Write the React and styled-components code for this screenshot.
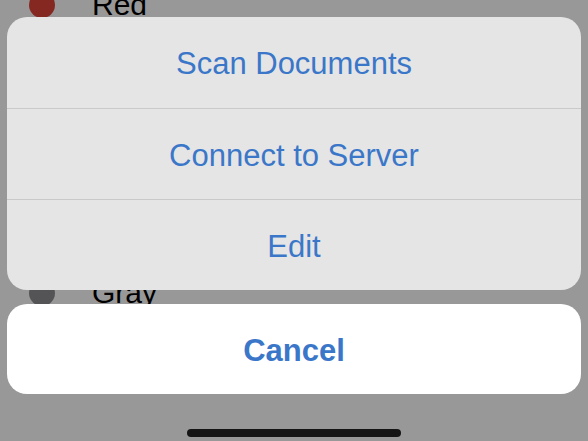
import React from "react";
import styled, { createGlobalStyle } from "styled-components";

const Global = createGlobalStyle`
  html, body { margin: 0; padding: 0; }
  body { width: 588px; height: 441px; overflow: hidden; font-family: "Liberation Sans", Arial, sans-serif; }
`;

const Screen = styled.div`
  position: relative;
  width: 588px;
  height: 441px;
  overflow: hidden;
  background: #ffffff;
`;

const List = styled.div`
  display: flex;
  flex-direction: column;
  margin-top: -19px;
`;

const ListRow = styled.div`
  display: flex;
  align-items: center;
  height: 48px;
  padding-left: 29px;
  gap: 37px;
  font-size: 30px;
  color: #000;
`;

const Dot = styled.span`
  width: 26px;
  height: 26px;
  border-radius: 50%;
  background: ${(p) => p.$color};
`;

const Dim = styled.div`
  position: absolute;
  inset: 0;
  background: rgba(0, 0, 0, 0.405);
`;

const Sheet = styled.div`
  position: absolute;
  left: 7px;
  right: 7px;
  top: 17px;
  display: flex;
  flex-direction: column;
  gap: 14px;
`;

const Group = styled.div`
  display: flex;
  flex-direction: column;
  background: #e5e5e5;
  border-radius: 20px;
  overflow: hidden;
`;

const Action = styled.div`
  height: 91px;
  padding-top: 3px;
  display: flex;
  align-items: center;
  justify-content: center;
  font-size: 31px;
  color: #3b77c9;
  border-top: ${(p) => (p.$first ? "none" : "1px solid #c9c9c9")};
  box-sizing: border-box;
`;

const CancelBtn = styled.div`
  height: 90px;
  padding-top: 3px;
  box-sizing: border-box;
  display: flex;
  align-items: center;
  justify-content: center;
  background: #ffffff;
  border-radius: 20px;
  font-size: 31px;
  font-weight: 700;
  color: #3b77c9;
`;

const HomeBar = styled.div`
  position: absolute;
  left: 187px;
  top: 429px;
  width: 214px;
  height: 8px;
  border-radius: 4px;
  background: #151515;
`;

const rows = [
  ["Red", "#e0443a"],
  ["Orange", "#f09a37"],
  ["Yellow", "#f5cd46"],
  ["Green", "#5ec85a"],
  ["Blue", "#3a82f7"],
  ["Purple", "#a050d8"],
  ["Gray", "#8e8e93"],
];

const actions = ["Scan Documents", "Connect to Server", "Edit"];

export default function App() {
  return (
    <>
      <Global />
      <Screen>
        <List>
          {rows.map(([name, c]) => (
            <ListRow key={name}>
              <Dot $color={c} />
              {name}
            </ListRow>
          ))}
        </List>
        <Dim />
        <Sheet>
          <Group>
            {actions.map((a, i) => (
              <Action key={a} $first={i === 0}>
                {a}
              </Action>
            ))}
          </Group>
          <CancelBtn>Cancel</CancelBtn>
        </Sheet>
        <HomeBar />
      </Screen>
    </>
  );
}
